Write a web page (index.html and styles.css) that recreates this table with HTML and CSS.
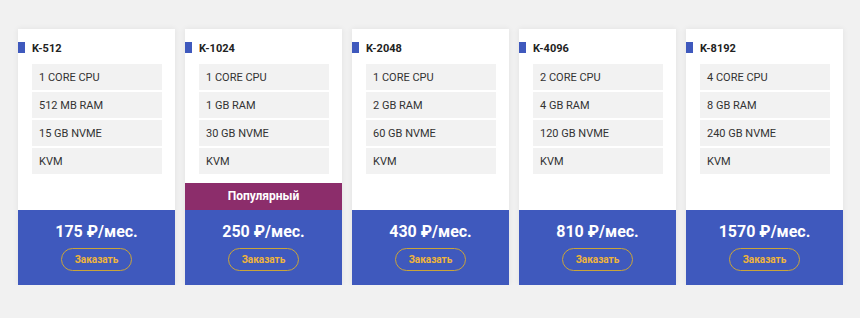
FILE: index.html
```html
<!DOCTYPE html>
<html lang="ru">
<head>
<meta charset="utf-8">
<link rel="stylesheet" href="styles.css">
</head>
<body>
<div class="plans">
  <div class="card">
    <div class="title">K-512</div>
    <ul class="features">
      <li>1 CORE CPU</li><li>512 MB RAM</li><li>15 GB NVME</li><li>KVM</li>
    </ul>
    <div class="spacer"></div>
    <div class="bottom"><div class="price">175 ₽/мес.</div><a class="btn">Заказать</a></div>
  </div>
  <div class="card">
    <div class="title">K-1024</div>
    <ul class="features">
      <li>1 CORE CPU</li><li>1 GB RAM</li><li>30 GB NVME</li><li>KVM</li>
    </ul>
    <div class="spacer"></div>
    <div class="popular">Популярный</div>
    <div class="bottom"><div class="price">250 ₽/мес.</div><a class="btn">Заказать</a></div>
  </div>
  <div class="card">
    <div class="title">K-2048</div>
    <ul class="features">
      <li>1 CORE CPU</li><li>2 GB RAM</li><li>60 GB NVME</li><li>KVM</li>
    </ul>
    <div class="spacer"></div>
    <div class="bottom"><div class="price">430 ₽/мес.</div><a class="btn">Заказать</a></div>
  </div>
  <div class="card">
    <div class="title">K-4096</div>
    <ul class="features">
      <li>2 CORE CPU</li><li>4 GB RAM</li><li>120 GB NVME</li><li>KVM</li>
    </ul>
    <div class="spacer"></div>
    <div class="bottom"><div class="price">810 ₽/мес.</div><a class="btn">Заказать</a></div>
  </div>
  <div class="card">
    <div class="title">K-8192</div>
    <ul class="features">
      <li>4 CORE CPU</li><li>8 GB RAM</li><li>240 GB NVME</li><li>KVM</li>
    </ul>
    <div class="spacer"></div>
    <div class="bottom"><div class="price">1570 ₽/мес.</div><a class="btn">Заказать</a></div>
  </div>
</div>
</body>
</html>
```
FILE: styles.css
```css
* { box-sizing: border-box; }
body {
  margin: 0;
  background: #f1f1f1;
  font-family: Roboto, "Liberation Sans", Arial, sans-serif;
}
.plans {
  display: grid;
  grid-template-columns: repeat(5, 1fr);
  gap: 10px;
  padding: 29px 17px 0 18px;
}
.card {
  height: 256px;
  background: #fff;
  display: flex;
  flex-direction: column;
  box-shadow: 0 0 6px rgba(0,0,0,0.07);
}
.title {
  position: relative;
  height: 35px;
  padding: 13px 0 0 14px;
  font-size: 11px;
  line-height: 13px;
  font-weight: 700;
  color: #222;
}
.title::before {
  content: "";
  position: absolute;
  left: 0;
  top: 13px;
  width: 7px;
  height: 11px;
  background: #3f59bd;
}
.features {
  list-style: none;
  margin: 0 13px 0 14px;
  padding: 0;
  display: flex;
  flex-direction: column;
  gap: 2px;
}
.features li {
  height: 26px;
  background: #f2f2f2;
  padding: 2px 0 0 7px;
  font-size: 11px;
  line-height: 24px;
  color: #333;
}
.spacer { flex: 1; }
.popular {
  height: 27px;
  background: #8c2d6b;
  color: #fff;
  font-size: 12px;
  font-weight: 700;
  line-height: 27px;
  text-align: center;
}
.bottom {
  height: 75px;
  background: #3f59bd;
  padding-top: 12px;
  display: flex;
  flex-direction: column;
  align-items: center;
}
.price {
  color: #fff;
  font-size: 16px;
  font-weight: 700;
  line-height: 20px;
}
.btn {
  margin-top: 6px;
  width: 71px;
  height: 23px;
  border: 1px solid #c9a43a;
  border-radius: 12px;
  color: #f0b53a;
  font-size: 10px;
  font-weight: 700;
  line-height: 21px;
  text-align: center;
}
```
